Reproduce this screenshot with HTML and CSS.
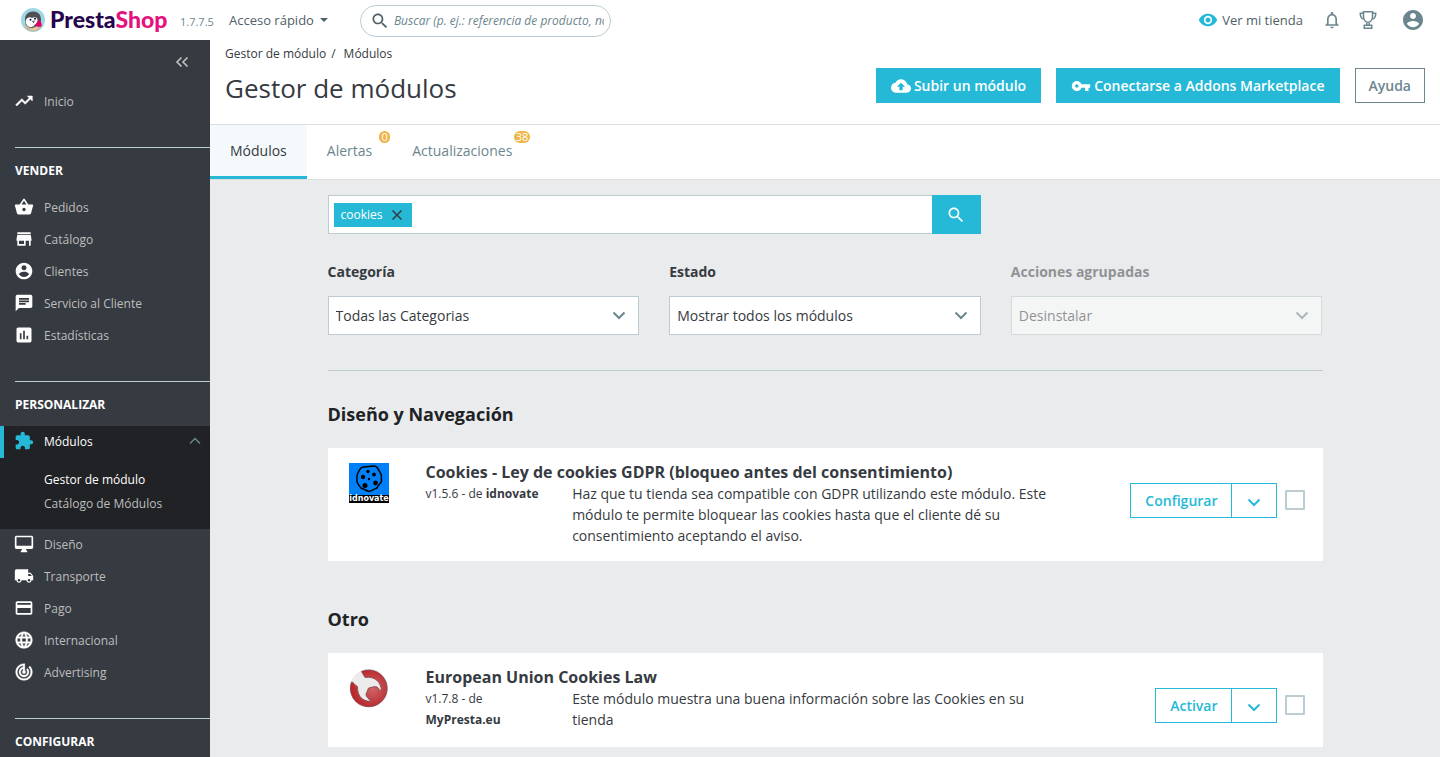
FILE: index.html
```html
<!DOCTYPE html>
<html lang="es">
<head>
<meta charset="utf-8">
<meta name="viewport" content="width=device-width, initial-scale=1">
<title>Gestor de módulos</title>
<link rel="stylesheet" href="styles.css">
</head>
<body>
<svg class="sprite" aria-hidden="true">
  <symbol id="trending" viewBox="0 0 24 24"><path d="M16 6l2.29 2.29-4.88 4.88-4-4L2 16.59 3.41 18l6-6 4 4 6.3-6.29L22 12V6z" stroke="currentColor" stroke-width=".6"/></symbol>
  <symbol id="basket" viewBox="0 0 24 24"><path d="M17.21 9l-4.38-6.56c-.19-.28-.51-.42-.83-.42-.32 0-.64.14-.83.43L6.79 9H2c-.55 0-1 .45-1 1 0 .09.01.18.04.27l2.54 9.27c.23.84 1 1.46 1.92 1.46h13c.92 0 1.69-.62 1.93-1.46l2.54-9.27L23 10c0-.55-.45-1-1-1h-4.79zM9 9l3-4.4L15 9H9zm3 8c-1.100 0-2-.9-2-2s.9-2 2-2 2 .9 2 2-.9 2-2 2z"/></symbol>
  <symbol id="store" viewBox="0 0 24 24"><path d="M20 4H4v2h16V4zm1 10v-2l-1-5H4l-1 5v2h1v6h10v-6h4v6h2v-6h1zm-9 4H6v-4h6v4z"/></symbol>
  <symbol id="account" viewBox="0 0 24 24"><path d="M12 2C6.480 2 2 6.480 2 12s4.480 10 10 10 10-4.480 10-10S17.520 2 12 2zm0 3c1.660 0 3 1.340 3 3s-1.340 3-3 3-3-1.340-3-3 1.340-3 3-3zm0 14.200c-2.500 0-4.710-1.280-6-3.220.030-1.990 4-3.080 6-3.080 1.990 0 5.970 1.090 6 3.080-1.290 1.940-3.500 3.220-6 3.220z"/></symbol>
  <symbol id="chat" viewBox="0 0 24 24"><path d="M20 2H4c-1.100 0-1.990.9-1.990 2L2 22l4-4h14c1.100 0 2-.9 2-2V4c0-1.100-.9-2-2-2zM6 9h12v2H6V9zm8 5H6v-2h8v2zm4-6H6V6h12v2z"/></symbol>
  <symbol id="stats" viewBox="0 0 24 24"><path d="M19 3H5c-1.100 0-2 .9-2 2v14c0 1.100.9 2 2 2h14c1.100 0 2-.9 2-2V5c0-1.100-.9-2-2-2zM9 17H7v-7h2v7zm4 0h-2V7h2v10zm4 0h-2v-4h2v4z"/></symbol>
  <symbol id="puzzle" viewBox="0 0 24 24"><path d="M20.500 11H19V7c0-1.100-.9-2-2-2h-4V3.500C13 2.120 11.880 1 10.500 1S8 2.120 8 3.500V5H4c-1.100 0-1.990.9-1.990 2v3.800H3.500c1.490 0 2.700 1.210 2.700 2.700s-1.210 2.700-2.700 2.700H2V20c0 1.100.9 2 2 2h3.800v-1.500c0-1.490 1.210-2.700 2.700-2.700 1.490 0 2.700 1.210 2.700 2.700V22H17c1.100 0 2-.9 2-2v-4h1.500c1.380 0 2.500-1.120 2.500-2.500S21.880 11 20.500 11z"/></symbol>
  <symbol id="desktop" viewBox="0 0 24 24"><path d="M21 2H3c-1.100 0-2 .9-2 2v12c0 1.100.9 2 2 2h7l-2 3v1h8v-1l-2-3h7c1.100 0 2-.9 2-2V4c0-1.100-.9-2-2-2zm0 12H3V4h18v10z"/></symbol>
  <symbol id="truck" viewBox="0 0 24 24"><path d="M20 8h-3V4H3c-1.100 0-2 .9-2 2v11h2c0 1.660 1.340 3 3 3s3-1.340 3-3h6c0 1.660 1.340 3 3 3s3-1.340 3-3h2v-5l-3-4zM6 18.500c-.83 0-1.500-.67-1.500-1.500s.67-1.500 1.500-1.500 1.500.67 1.500 1.500-.67 1.500-1.500 1.500zm13.500-9l1.960 2.500H17V9.500h2.500zm-1.500 9c-.83 0-1.500-.67-1.500-1.500s.67-1.500 1.500-1.500 1.500.67 1.500 1.500-.67 1.500-1.500 1.500z"/></symbol>
  <symbol id="payment" viewBox="0 0 24 24"><path d="M20 4H4c-1.110 0-1.990.89-1.990 2L2 18c0 1.110.89 2 2 2h16c1.110 0 2-.89 2-2V6c0-1.110-.89-2-2-2zm0 14H4v-6h16v6zm0-10H4V6h16v2z"/></symbol>
  <symbol id="globe" viewBox="0 0 24 24"><path d="M11.990 2C6.470 2 2 6.480 2 12s4.470 10 9.990 10C17.520 22 22 17.520 22 12S17.520 2 11.990 2zm6.930 6h-2.950c-.32-1.250-.78-2.450-1.380-3.560 1.840.63 3.370 1.910 4.330 3.560zM12 4.040c.83 1.200 1.480 2.530 1.910 3.960h-3.820c.43-1.430 1.080-2.760 1.910-3.960zM4.260 14C4.100 13.360 4 12.690 4 12s.1-1.360.26-2h3.380c-.08.66-.14 1.320-.14 2 0 .68.06 1.340.14 2H4.260zm.82 2h2.950c.32 1.250.78 2.450 1.380 3.560-1.840-.63-3.370-1.900-4.330-3.560zm2.950-8H5.080c.96-1.660 2.490-2.930 4.330-3.560C8.810 5.550 8.350 6.750 8.030 8zM12 19.960c-.83-1.200-1.480-2.530-1.910-3.960h3.820c-.43 1.430-1.080 2.760-1.910 3.960zM14.340 14H9.660c-.09-.66-.16-1.320-.16-2 0-.68.07-1.350.16-2h4.680c.09.65.16 1.320.16 2 0 .68-.07 1.340-.16 2zm.25 5.560c.6-1.110 1.060-2.310 1.380-3.560h2.950c-.96 1.650-2.490 2.930-4.330 3.560zM16.360 14c.08-.66.14-1.320.14-2 0-.68-.06-1.340-.14-2h3.380c.16.640.26 1.310.26 2s-.1 1.360-.26 2h-3.380z" stroke="currentColor" stroke-width=".5"/></symbol>
  <symbol id="target" viewBox="0 0 24 24"><path d="M19.070 4.930l-1.410 1.410C19.100 7.790 20 9.790 20 12c0 4.420-3.580 8-8 8s-8-3.580-8-8c0-4.080 3.050-7.440 7-7.930v2.020C8.160 6.570 6 9.030 6 12c0 3.310 2.690 6 6 6s6-2.690 6-6c0-1.660-.67-3.160-1.760-4.240l-1.410 1.410C15.550 9.900 16 10.900 16 12c0 2.210-1.790 4-4 4s-4-1.790-4-4c0-1.860 1.280-3.410 3-3.860v2.140c-.6.35-1 .98-1 1.720 0 1.100.9 2 2 2s2-.9 2-2c0-.74-.4-1.380-1-1.720V2h-1C6.480 2 2 6.480 2 12s4.480 10 10 10 10-4.480 10-10c0-2.760-1.120-5.260-2.930-7.070z" stroke="currentColor" stroke-width=".4"/></symbol>
  <symbol id="upload" viewBox="0 0 24 24"><path d="M19.350 10.040C18.670 6.590 15.640 4 12 4 9.110 4 6.600 5.640 5.350 8.040 2.340 8.360 0 10.910 0 14c0 3.310 2.690 6 6 6h13c2.760 0 5-2.240 5-5 0-2.640-2.050-4.780-4.650-4.960zM14 13v4h-4v-4H7l5-5 5 5h-3z"/></symbol>
  <symbol id="key" viewBox="0 0 24 24"><path d="M12.650 10C11.830 7.670 9.610 6 7 6c-3.310 0-6 2.690-6 6s2.690 6 6 6c2.610 0 4.830-1.670 5.650-4H17v4h4v-4h2v-4H12.650zM7 14c-1.100 0-2-.9-2-2s.9-2 2-2 2 .9 2 2-.9 2-2 2z"/></symbol>
  <symbol id="eye" viewBox="0 0 24 24"><path d="M12 4.500C7 4.500 2.730 7.610 1 12c1.730 4.390 6 7.500 11 7.500s9.270-3.110 11-7.500c-1.730-4.390-6-7.500-11-7.500zM12 17c-2.760 0-5-2.240-5-5s2.240-5 5-5 5 2.240 5 5-2.240 5-5 5zm0-8c-1.660 0-3 1.340-3 3s1.340 3 3 3 3-1.340 3-3-1.340-3-3-3z"/></symbol>
  <symbol id="bell" viewBox="0 0 24 24"><path d="M12 22c1.100 0 2-.9 2-2h-4c0 1.100.9 2 2 2zm6-6v-5c0-3.070-1.630-5.640-4.500-6.320V4c0-.83-.67-1.500-1.500-1.500s-1.500.67-1.500 1.500v.68C7.640 5.360 6 7.920 6 11v5l-2 2v1h16v-1l-2-2zm-2 1H8v-6c0-2.480 1.510-4.500 4-4.500s4 2.020 4 4.500v6z"/></symbol>
  <symbol id="search" viewBox="0 0 24 24"><path d="M15.500 14h-.79l-.28-.27C15.410 12.590 16 11.110 16 9.500 16 5.910 13.090 3 9.500 3S3 5.910 3 9.500 5.910 16 9.500 16c1.610 0 3.090-.59 4.230-1.570l.27.28v.79l5 4.990L20.490 19l-4.990-5zm-6 0C7.010 14 5 11.990 5 9.500S7.010 5 9.500 5 14 7.010 14 9.500 11.990 14 9.500 14z"/></symbol>
  <symbol id="chevron" viewBox="0 0 14 14"><path d="M1.500 4.500L7 10l5.500-5.500" fill="none" stroke="currentColor" stroke-width="2"/></symbol>
  <symbol id="trophy" viewBox="0 0 20 20"><g fill="none" stroke="currentColor" stroke-width="1.500"><path d="M5.500 1.750h9v4.500c0 3.500-1.800 6-4.500 6s-4.500-2.500-4.500-6zM5.500 3.250H2.250c0 3.200 1.200 5.500 4 6M14.500 3.250h3.250c0 3.200-1.200 5.500-4 6M8.750 12v3M11.250 12v3M6.250 15.250h7.500v3h-7.500z"/></g></symbol>
</svg>

<header class="topbar">
  <a class="brand" href="#">
    <svg class="brand-mark" viewBox="0 0 24 24" aria-hidden="true">
      <circle cx="12" cy="12" r="12" fill="#9fd6e6"/>
      <path d="M3.500 15c0 5 3 8 8.500 8.500 5 0 8-3 9-6L12 12z" fill="#c9b8a0"/>
      <path d="M4 11c0-5 4-8 9-7.500 5 .5 7 4 7 9L16 18l-6 3-5-4z" fill="#4f5054"/>
      <path d="M5 12c1-2.500 4-3.500 6-2 2-1.500 5-1 5.500 1.500S15 16 13.500 17c-1 2-4 3-6 1.500C5 17 4.500 14 5 12z" fill="#fff"/>
      <circle cx="9.500" cy="11.800" r="1" fill="#25054d"/>
      <circle cx="14" cy="10.800" r="1" fill="#25054d"/>
      <path d="M11 13l3-.5-1.500 3z" fill="#5c5c5c"/>
      <path d="M14 17c1-1 3-4 4.500-5 1.500 1 2.500 4 2 6.500-2 .5-5 .5-6.500-1.500z" fill="#df0067"/>
      <path d="M8 19.500c2 1 5 .5 7-1l2 2c-2 2.500-7 3-9-1z" fill="#e2c59a"/>
    </svg>
    <span class="brand-name">Presta<span class="brand-accent">Shop</span></span>
  </a>
  <span class="version">1.7.7.5</span>
  <button class="quick" type="button">Acceso rápido <span class="caret"></span></button>
  <form class="finder">
    <svg class="icon icon-20" aria-hidden="true"><use href="#search"/></svg>
    <input type="text" aria-label="Buscar" placeholder="Buscar (p. ej.: referencia de producto, nombre del cliente...)">
  </form>
  <div class="topbar-right">
    <a class="view-shop" href="#"><svg class="icon icon-20" aria-hidden="true"><use href="#eye"/></svg>Ver mi tienda</a>
    <button class="plain" type="button" aria-label="Notificaciones"><svg class="icon icon-20" aria-hidden="true"><use href="#bell"/></svg></button>
    <button class="plain" type="button" aria-label="Logros"><svg class="icon icon-20" aria-hidden="true"><use href="#trophy"/></svg></button>
    <button class="plain profile" type="button" aria-label="Perfil"><svg class="icon icon-24" aria-hidden="true"><use href="#account"/></svg></button>
  </div>
</header>

<div class="shell">
  <nav class="sidebar" aria-label="Principal">
    <button class="collapse" type="button" aria-label="Contraer menú"><svg class="icon icon-14" viewBox="0 0 14 14" aria-hidden="true"><path d="M6.500 2.500L2 7l4.500 4.500M12.500 2.500L8 7l4.500 4.500" fill="none" stroke="currentColor" stroke-width="1.700"/></svg></button>
    <a class="nav-item" href="#"><svg class="icon icon-20" aria-hidden="true"><use href="#trending"/></svg>Inicio</a>
    <section class="nav-group">
      <h2>VENDER</h2>
      <a class="nav-item" href="#"><svg class="icon icon-20" aria-hidden="true"><use href="#basket"/></svg>Pedidos</a>
      <a class="nav-item" href="#"><svg class="icon icon-20" aria-hidden="true"><use href="#store"/></svg>Catálogo</a>
      <a class="nav-item" href="#"><svg class="icon icon-20" aria-hidden="true"><use href="#account"/></svg>Clientes</a>
      <a class="nav-item" href="#"><svg class="icon icon-20" aria-hidden="true"><use href="#chat"/></svg>Servicio al Cliente</a>
      <a class="nav-item" href="#"><svg class="icon icon-20" aria-hidden="true"><use href="#stats"/></svg>Estadísticas</a>
    </section>
    <section class="nav-group">
      <h2>PERSONALIZAR</h2>
      <div class="nav-open">
        <a class="nav-item active" href="#"><svg class="icon icon-20" aria-hidden="true"><use href="#puzzle"/></svg>Módulos<svg class="icon nav-arrow" viewBox="0 0 12 12" aria-hidden="true"><path d="M1 8.500l5-5 5 5" fill="none" stroke="currentColor" stroke-width="1.500"/></svg></a>
        <div class="subnav">
          <a class="current" href="#">Gestor de módulo</a>
          <a href="#">Catálogo de Módulos</a>
        </div>
      </div>
      <a class="nav-item" href="#"><svg class="icon icon-20" aria-hidden="true"><use href="#desktop"/></svg>Diseño</a>
      <a class="nav-item" href="#"><svg class="icon icon-20" aria-hidden="true"><use href="#truck"/></svg>Transporte</a>
      <a class="nav-item" href="#"><svg class="icon icon-20" aria-hidden="true"><use href="#payment"/></svg>Pago</a>
      <a class="nav-item" href="#"><svg class="icon icon-20" aria-hidden="true"><use href="#globe"/></svg>Internacional</a>
      <a class="nav-item" href="#"><svg class="icon icon-20" aria-hidden="true"><use href="#target"/></svg>Advertising</a>
    </section>
    <section class="nav-group last">
      <h2>CONFIGURAR</h2>
    </section>
  </nav>

  <main class="main">
    <div class="page-head">
      <div>
        <nav class="crumbs" aria-label="Ruta"><a href="#">Gestor de módulo</a><span>/</span><a href="#">Módulos</a></nav>
        <h1>Gestor de módulos</h1>
      </div>
      <div class="head-actions">
        <button class="btn primary" type="button"><svg class="icon icon-20" aria-hidden="true"><use href="#upload"/></svg>Subir un módulo</button>
        <button class="btn primary" type="button"><svg class="icon icon-20" aria-hidden="true"><use href="#key"/></svg>Conectarse a Addons Marketplace</button>
        <button class="btn outline" type="button">Ayuda</button>
      </div>
    </div>
    <nav class="tabs" aria-label="Secciones">
      <a class="tab selected" href="#">Módulos</a>
      <a class="tab" href="#">Alertas<span class="badge">0</span></a>
      <a class="tab" href="#">Actualizaciones<span class="badge">38</span></a>
    </nav>

    <div class="content">
      <div class="inner">
        <form class="filters">
          <div class="tag-search">
            <div class="tag-field">
              <span class="tag">cookies<button type="button" aria-label="Quitar cookies"><svg class="icon" viewBox="0 0 12 12" aria-hidden="true"><path d="M1.500 1.500l9 9M10.500 1.500l-9 9" fill="none" stroke="currentColor" stroke-width="1.500"/></svg></button></span>
              <input type="text" aria-label="Buscar módulos">
            </div>
            <button class="search-btn" type="submit" aria-label="Buscar"><svg class="icon icon-20" aria-hidden="true"><use href="#search"/></svg></button>
          </div>
          <div class="field">
            <label for="cat">Categoría</label>
            <div class="select"><select id="cat"><option>Todas las Categorias</option></select><svg class="icon" aria-hidden="true"><use href="#chevron"/></svg></div>
          </div>
          <div class="field">
            <label for="state">Estado</label>
            <div class="select"><select id="state"><option>Mostrar todos los módulos</option></select><svg class="icon" aria-hidden="true"><use href="#chevron"/></svg></div>
          </div>
          <div class="field disabled">
            <label for="bulk">Acciones agrupadas</label>
            <div class="select"><select id="bulk" disabled><option>Desinstalar</option></select><svg class="icon" aria-hidden="true"><use href="#chevron"/></svg></div>
          </div>
        </form>

        <section class="group">
          <h2>Diseño y Navegación</h2>
          <article class="card">
            <svg class="thumb" viewBox="0 0 40 40" role="img" aria-label="idnovate">
              <path d="M0 0h40v40H0z" fill="#0080f8"/>
              <path d="M12 5c3-2 5-1 8-1.500l4-.5c2 0 4 0 5 3l3 5c1 3 0 4 .5 7-1 3-3.500 4-4.500 7-3 1-5 3-8 3.500-3-1-5-2.500-8-3.500-2-2-3-4-4-6 0-4-.5-6 .5-8 1-2 1.500-4 3.500-6z" fill="none" stroke="#000" stroke-width="1.500"/>
              <g><circle cx="19" cy="8.500" r="1.700"/><circle cx="25" cy="11.500" r="1.900"/><circle cx="14" cy="14" r="2.200"/><circle cx="20" cy="16" r="1.200"/><circle cx="26.500" cy="20" r="2.400"/><circle cx="16" cy="22.500" r="2.500"/></g>
              <path d="M0 32h40v8H0z"/>
              <text class="thumb-text" x="20" y="38" text-anchor="middle">idnovate</text>
            </svg>
            <h3>Cookies - Ley de cookies GDPR (bloqueo antes del consentimiento)</h3>
            <p class="meta">v1.5.6 - de <b>idnovate</b></p>
            <p class="desc">Haz que tu tienda sea compatible con GDPR utilizando este módulo. Este módulo te permite bloquear las cookies hasta que el cliente dé su consentimiento aceptando el aviso.</p>
            <div class="actions">
              <button class="act" type="button">Configurar</button><button class="act more" type="button" aria-label="Más acciones"><svg class="icon" aria-hidden="true"><use href="#chevron"/></svg></button>
              <input type="checkbox" aria-label="Seleccionar Cookies - Ley de cookies GDPR">
            </div>
          </article>
        </section>

        <section class="group">
          <h2>Otro</h2>
          <article class="card">
            <svg class="thumb" viewBox="0 0 40 40" role="img" aria-label="MyPresta.eu">
              <defs><radialGradient id="red" cx=".6" cy=".5" r=".55"><stop offset="0" stop-color="#d0666a"/><stop offset="1" stop-color="#b9262c"/></radialGradient></defs>
              <circle cx="20" cy="20" r="18.700" fill="#ececec" stroke="#ddd" stroke-width=".5"/>
              <path d="M12.500 3.500A18.400 18.400 0 1 1 2.500 14c2 0 3 3 6 4.500 0 8 3 14.500 13.500 15-3-4-5-4-5-7.500l2.500-6 6-1.500c4 0 4 3 7 4.500C32 14 26 8 16 9.500z" fill="url(#red)" stroke="#80484a" stroke-width=".8"/>
            </svg>
            <h3>European Union Cookies Law</h3>
            <p class="meta">v1.7.8 - de <b>MyPresta.eu</b></p>
            <p class="desc">Este módulo muestra una buena información sobre las Cookies en su tienda</p>
            <div class="actions">
              <button class="act" type="button">Activar</button><button class="act more" type="button" aria-label="Más acciones"><svg class="icon" aria-hidden="true"><use href="#chevron"/></svg></button>
              <input type="checkbox" aria-label="Seleccionar European Union Cookies Law">
            </div>
          </article>
        </section>
      </div>
    </div>
  </main>
</div>
</body>
</html>
```
FILE: styles.css
```css
* { box-sizing: border-box; }
body {
  margin: 0;
  min-height: 100vh;
  display: flex;
  flex-direction: column;
  font-family: "Open Sans", "Noto Sans", sans-serif;
  font-size: 14px;
  color: #363a41;
  background: #eaebec;
}
button, input, select { font: inherit; color: inherit; margin: 0; border-radius: 0; }
button { cursor: pointer; border: 0; padding: 0; background: none; }
a { color: inherit; text-decoration: none; }
h1, h2, h3, p { margin: 0; }
.sprite { position: absolute; width: 0; height: 0; }
.icon { display: block; flex: none; width: 14px; height: 14px; fill: currentColor; }
.icon-20 { width: 20px; height: 20px; }
.icon-24 { width: 24px; height: 24px; }

/* Top bar */
.topbar { height: 40px; display: flex; align-items: center; padding: 0 15px 1px 21px; background: #fff; }
.brand { display: flex; align-items: center; gap: 5px; width: 159px; }
.brand-mark { width: 24px; height: 24px; flex: none; }
.brand-name { font-family: Lato, sans-serif; font-weight: 900; font-size: 23px; line-height: 39px; color: #25054d; }
.brand-accent { color: #e5127d; }
.version { width: 49px; padding-top: 4px; font-size: 11px; color: #6c868e; }
.quick { display: flex; align-items: center; gap: 6px; font-size: 13px; color: #4e6167; }
.caret { border: 4px solid transparent; border-top-color: #4e6167; border-bottom: 0; }
.finder { display: flex; align-items: center; gap: 4px; width: 251px; height: 32px; margin: 2px 0 0 32px; padding: 0 6px 0 9px; border: 1px solid #bbcdd2; border-radius: 16px; color: #4e6167; }
.finder input { flex: 1; min-width: 0; border: 0; padding: 0; outline: 0; background: none; font-size: 12px; font-style: italic; }
.finder input::placeholder { color: #6c868e; opacity: 1; }
.topbar-right { display: flex; align-items: center; margin-left: auto; color: #6c868e; }
.view-shop { display: flex; align-items: center; gap: 4px; margin-right: 19px; font-size: 13px; color: #4e6167; }
.view-shop .icon { color: #25b9d7; }
.plain { margin-right: 16px; }
.profile { margin: 0 0 0 7px; }

/* Sidebar */
.shell { flex: 1; display: flex; }
.sidebar { width: 210px; flex: none; background: #363a41; color: #bebebe; font-size: 12px; }
.collapse { display: block; margin: 15px 21px 17px auto; color: #bebebe; }
.nav-item { display: flex; align-items: center; gap: 10px; height: 32px; padding: 0 0 2px 14px; }
.nav-item .icon-20 { color: #fff; }
.nav-group { margin-top: 29px; }
.nav-group::before { content: ""; display: block; height: 1px; margin-left: 15px; background: #bbcdd2; }
.nav-group h2 { padding: 14px 15px 13px; font-size: 12px; line-height: 17px; font-weight: 700; color: #fff; }
.nav-open { background: #202226; }
.nav-item.active { padding-left: 10px; border-left: 4px solid #25b9d7; color: #fff; font-weight: 500; }
.nav-item.active .icon-20 { color: #25b9d7; }
.nav-item.active .nav-arrow { width: 12px; height: 12px; margin: 0 9px 0 auto; color: #6c868e; }
.subnav { display: flex; flex-direction: column; padding: 10px 0 13px 44px; line-height: 24px; }
.subnav .current { color: #fff; font-weight: 500; }

/* Page header */
.main { flex: 1; min-width: 0; }
.page-head { display: flex; justify-content: space-between; padding: 5px 15px 18px; background: #fff; }
.crumbs { display: flex; gap: 5px; font-size: 12px; line-height: 17px; }
.crumbs a:last-child { margin-left: 3px; }
h1 { margin-top: 8px; font-size: 26px; line-height: 36px; font-weight: 400; }
.head-actions { display: flex; gap: 15px; margin-top: 23px; }
.btn { display: flex; align-items: center; gap: 3px; height: 35px; padding: 0 14px; border: 1px solid #25b9d7; font-weight: 600; white-space: nowrap; }
.primary { background: #25b9d7; color: #fff; }
.outline { padding: 0 13px; border-color: #6c868e; color: #6c868e; }
.tabs { display: flex; height: 56px; border: 1px solid #dfdfdf; border-width: 1px 0; background: #fff; color: #6c868e; }
.tab { position: relative; padding: 0 20px; line-height: 52px; }
.tab.selected { background: #f4f9fb; border-bottom: 3px solid #25b9d7; color: #363a41; }
.badge { position: absolute; top: 6px; right: 2px; min-width: 11px; height: 12px; padding: 0 2px; border-radius: 6px; background: #f0b547; color: #fff; font-size: 11px; line-height: 12px; text-align: center; }

/* Filters */
.content { display: grid; grid-template-columns: 1fr 10fr 1fr; padding: 15px 0 10px; }
.inner { grid-column: 2; padding: 0 15px; min-width: 0; }
.filters { display: grid; grid-template-columns: repeat(3, minmax(0, 1fr)); gap: 28px 30px; padding-bottom: 35px; border-bottom: 1px solid #bbcdd2; }
.tag-search { grid-column: span 2; display: flex; }
.filters .field:nth-child(2) { grid-column: 1; }
.tag-field { flex: 1; min-width: 0; display: flex; align-items: center; height: 39px; padding: 0 5px; border: 1px solid #bbcdd2; border-right: 0; background: #fff; }
.tag { display: flex; align-items: center; gap: 9px; height: 24px; padding: 0 9px 0 7px; background: #25b9d7; color: #fff; font-size: 12px; font-weight: 500; }
.tag button { color: #363a41; }
.tag .icon { width: 12px; height: 12px; }
.tag-field input { flex: 1; min-width: 0; border: 0; outline: 0; background: none; }
.search-btn { display: grid; place-items: center; width: 49px; background: #25b9d7; color: #fff; }
.field label { display: block; margin-bottom: 14px; line-height: 20px; font-weight: 700; }
.select { position: relative; }
.select select { display: block; width: 100%; height: 39px; padding: 0 30px 0 7px; border: 1px solid #bbcdd2; background: #fff; appearance: none; opacity: 1; }
.select .icon { position: absolute; right: 13px; top: 12px; color: #6c868e; pointer-events: none; }
.disabled { opacity: .5; }

/* Module list */
.group h2 { font-size: 18px; line-height: 25px; font-weight: 700; color: #202226; }
.group { padding-top: 31px; }
.group + .group { padding-top: 46px; }
.card { display: grid; grid-template-columns: 98px 3fr 10fr 5fr; grid-template-rows: 21px auto; min-height: 94px; margin-top: 21px; padding: 14px 17px 15px 0; background: #fff; line-height: 21px; }
.thumb { grid-row: span 2; width: 40px; height: 40px; margin: 1px 0 0 21px; }
.thumb-text { font: 700 8px "DejaVu Sans", sans-serif; fill: #fff; }
.card h3 { grid-column: 2 / 5; font-size: 16px; font-weight: 700; }
.meta { grid-column: 2; padding-right: 20px; font-size: 12px; }
.desc { grid-column: 3; }
.actions { display: flex; justify-content: flex-end; align-items: flex-start; }
.act { height: 35px; padding: 0 14px; border: 1px solid #25b9d7; background: #fff; color: #25b9d7; font-weight: 600; }
.more { margin-left: -1px; padding: 2px 15px 0; }
.actions input { appearance: none; width: 20px; height: 20px; margin: 7px 0 0 8px; border: 2px solid #bbcdd2; border-radius: 1px; background: #fff; }
```
